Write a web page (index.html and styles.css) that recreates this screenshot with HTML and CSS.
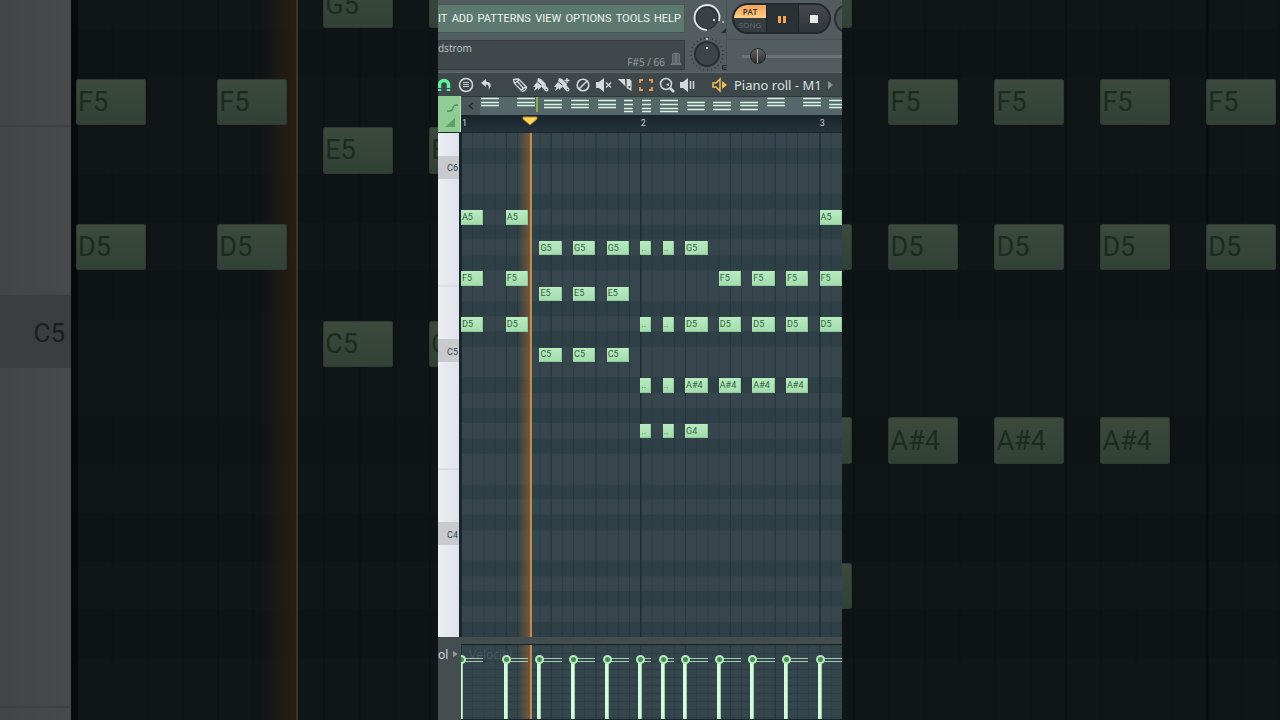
FILE: index.html
```html
<!DOCTYPE html>
<html lang="en">
<head>
<meta charset="utf-8">
<title>Piano roll - M1</title>
<link rel="stylesheet" href="styles.css">
</head>
<body>
<div class="backdrop" aria-hidden="true">
  <div class="keys keys-large"><span class="key-c">C5</span></div>
  <div class="grid grid-large">
    <span class="playhead"></span>
    <span class="note" style="grid-area:1/8/auto/span 2">G5</span>
    <span class="note" style="grid-area:3/1/auto/span 2">F5</span>
    <span class="note" style="grid-area:3/5/auto/span 2">F5</span>
    <span class="note" style="grid-area:6/1/auto/span 2">D5</span>
    <span class="note" style="grid-area:6/5/auto/span 2">D5</span>
    <span class="note" style="grid-area:4/8/auto/span 2">E5</span>
    <span class="note" style="grid-area:4/11/auto/span 2">E</span>
    <span class="note" style="grid-area:8/8/auto/span 2">C5</span>
    <span class="note" style="grid-area:8/11/auto/span 2">C</span>
    <span class="note" style="grid-area:1/11/auto/span 2"></span>
    <span class="note" style="grid-area:1/21/auto/span 2"></span>
    <span class="note" style="grid-area:6/21/auto/span 2"></span>
    <span class="note" style="grid-area:10/21/auto/span 2"></span>
    <span class="note" style="grid-area:13/21/auto/span 2"></span>
    <span class="note" style="grid-area:3/24/auto/span 2">F5</span>
    <span class="note" style="grid-area:3/27/auto/span 2">F5</span>
    <span class="note" style="grid-area:3/30/auto/span 2">F5</span>
    <span class="note" style="grid-area:3/33/auto/span 2">F5</span>
    <span class="note" style="grid-area:6/24/auto/span 2">D5</span>
    <span class="note" style="grid-area:6/27/auto/span 2">D5</span>
    <span class="note" style="grid-area:6/30/auto/span 2">D5</span>
    <span class="note" style="grid-area:6/33/auto/span 2">D5</span>
    <span class="note" style="grid-area:10/24/auto/span 2">A#4</span>
    <span class="note" style="grid-area:10/27/auto/span 2">A#4</span>
    <span class="note" style="grid-area:10/30/auto/span 2">A#4</span>
  </div>
</div>

<main class="app">
  <header class="top">
    <div class="top-left">
      <nav class="menu">
        <button>IT</button><button>ADD</button><button>PATTERNS</button><button>VIEW</button><button>OPTIONS</button><button>TOOLS</button><button>HELP</button>
      </nav>
      <div class="hint">
        <span class="hint-name">dstrom</span>
        <span class="hint-note">F#5 / 66
          <svg width="14" height="16" viewBox="0 0 14 16"><path d="M3 3q4-3 8 0v8l2 3H1l2-3z" fill="#6d7678"/><path d="M5 3v9M9 3v9" stroke="#465153"/></svg>
        </span>
      </div>
    </div>
    <div class="knobs">
      <button class="knob" aria-label="Main volume">
        <svg width="38" height="36" viewBox="0 0 38 36"><circle cx="18" cy="18" r="11" fill="#394144" stroke="#242b2e"/><path d="M18 30A12.500 12.500 0 1 1 30 21" fill="none" stroke="#e4e8e8" stroke-width="1.800"/><circle cx="25" cy="20" r="1" fill="#fff"/><circle cx="34" cy="22" r="1" fill="#bcc3c4"/><path d="M37 28v5h-5z" fill="#252d30"/></svg>
      </button>
      <button class="knob" aria-label="Main pitch">
        <svg width="38" height="36" viewBox="0 0 38 36"><circle cx="18" cy="18" r="16" fill="none" stroke="#2c3538" stroke-width="1.500" stroke-dasharray="1 3"/><circle cx="18" cy="18" r="13" fill="#272e31"/><circle cx="18" cy="18" r="11" fill="#3d4548"/><circle cx="18" cy="12" r="1" fill="#fff"/><circle cx="18" cy="3" r="1" fill="#dce0e0"/><path d="M37.500 29.500h-4v4h4M33.500 31.500h4" fill="none" stroke="#252d30"/></svg>
      </button>
    </div>
    <div class="top-right">
      <div class="transport">
        <div class="pill">
          <div class="mode"><button class="pat">PAT</button><button class="song">SONG</button></div>
          <button class="play" aria-label="Pause"><svg width="8" height="8" viewBox="0 0 8 8"><path d="M0 1h3v7H0zM5 1h3v7H5z" fill="#f6a54c"/></svg></button>
          <button class="stop" aria-label="Stop"><svg width="8" height="8" viewBox="0 0 8 8"><path d="M0 0h8v8H0z" fill="#e6e8e9"/></svg></button>
        </div>
        <button class="record" aria-label="Record"></button>
      </div>
      <div class="position"><input type="range" min="0" max="100" value="8" aria-label="Song position"></div>
    </div>
  </header>

  <div class="toolbar">
    <button class="tool tool-first" aria-label="Snap"><svg width="16" height="16" viewBox="0 0 16 16"><path d="M3.500 14V8a4.500 4.500 0 0 1 9 0v6" fill="none" stroke="#5df29b" stroke-width="3.500"/><path d="M1 11.500h5M10 11.500h5" stroke="#3d4749"/></svg></button>
    <button class="tool" aria-label="Piano roll options"><svg width="16" height="16" viewBox="0 0 16 16"><circle cx="8" cy="8" r="6.500" fill="none" stroke="#d3dadb" stroke-width="1.500"/><path d="M5 5.500h6M5 7.500h6M5 9.500h6" stroke="#d3dadb" stroke-width=".9"/></svg></button>
    <button class="tool" aria-label="Undo"><svg width="16" height="16" viewBox="0 0 16 16"><path d="M7 2L2 6l5 4V7.500q4 0 2.500 5.500Q15 6 7 4.500z" fill="#d3dadb"/></svg></button>
    <span class="tool-gap"></span>
    <button class="tool" aria-label="Draw"><svg width="16" height="16" viewBox="0 0 16 16"><path d="M1.500 2.500l5-.5 8 8q0 3-4 4.500l-8-8zM3 6L7 3M5 4l7 8M9 14q1-3 5-4" fill="none" stroke="#d3dadb" stroke-width="1.300"/></svg></button>
    <button class="tool" aria-label="Paint"><svg width="16" height="16" viewBox="0 0 16 16"><path d="M5 1l3 1 5 5-1 2-3 .5L5 13l0-2-4 3 1.500-4L0 10l4-5z" fill="#d3dadb"/><path d="M4 4.500l6 5" stroke="#3e484a"/><path d="M10.500 9l3 3.500" stroke="#d3dadb" stroke-width="4" stroke-linecap="round"/><circle cx="13.500" cy="12.500" r=".8" fill="#3d4749"/></svg></button>
    <button class="tool" aria-label="Paint sequence"><svg width="16" height="16" viewBox="0 0 16 16"><path d="M5 1l3 1 5 5-1 2-3 .5L5 13l0-2-4 3 1.500-4L0 10l4-5z" fill="#d3dadb"/><path d="M4 4.500l6 5" stroke="#3e484a"/><path d="M10.500 9l3 3.500" stroke="#d3dadb" stroke-width="4" stroke-linecap="round"/><path d="M13 1v5M10.500 3.500h5" stroke="#d3dadb" stroke-width="1.300"/><circle cx="13.500" cy="12.500" r=".8" fill="#3d4749"/></svg></button>
    <button class="tool" aria-label="Delete"><svg width="16" height="16" viewBox="0 0 16 16"><circle cx="8" cy="8" r="5.800" fill="none" stroke="#d3dadb" stroke-width="1.600"/><path d="M4 12l8-8" stroke="#d3dadb" stroke-width="1.600"/></svg></button>
    <button class="tool" aria-label="Mute"><svg width="16" height="16" viewBox="0 0 16 16"><path d="M0 5h3l5-4v14l-5-4H0z" fill="#d3dadb"/><path d="M10 5.500l5 5M15 5.500l-5 5" stroke="#d3dadb" stroke-width="1.300"/></svg></button>
    <button class="tool" aria-label="Slice"><svg width="16" height="16" viewBox="0 0 16 16"><path d="M1 2h7l1 8z" fill="#d3dadb"/><path d="M9.500 2h3l2 2v10l-5-3z" fill="#d3dadb"/><path d="M8.800 1v10" stroke="#3d4749" stroke-width=".8"/><circle cx="12.300" cy="10" r="1" fill="#3d4749"/></svg></button>
    <button class="tool" aria-label="Select"><svg width="16" height="16" viewBox="0 0 16 16"><path d="M2 6V3h3M11 3h3v3M14 10v3h-3M5 13H2v-3" fill="none" stroke="#ec9c53" stroke-width="1.800"/></svg></button>
    <button class="tool" aria-label="Zoom"><svg width="16" height="16" viewBox="0 0 16 16"><circle cx="7" cy="7" r="5.500" fill="none" stroke="#d3dadb" stroke-width="1.500"/><path d="M7 8l3-2v3z" fill="#d3dadb"/><path d="M11 11l4 4" fill="none" stroke="#d3dadb" stroke-width="2.500"/></svg></button>
    <button class="tool" aria-label="Playback"><svg width="16" height="16" viewBox="0 0 16 16"><path d="M0 5h3l5-4v14l-5-4H0z" fill="#d3dadb"/><path d="M10.500 4v8M13.500 4v8" stroke="#d3dadb" stroke-width="1.500"/></svg></button>
    <span class="tool-gap"></span>
    <button class="title"><svg width="16" height="16" viewBox="0 0 16 16"><path d="M1 6h3l4-4v12l-4-4H1z" fill="none" stroke="#f4bd4c" stroke-width="1.500"/><path d="M10 4l5 4-5 4z" fill="#f4bd4c"/></svg>Piano roll - M1<svg width="5" height="8" viewBox="0 0 5 8"><path d="M0 0l5 4-5 4z" fill="#899193"/></svg></button>
  </div>

  <div class="ruler">
    <button class="ramp" aria-label="Slide"><svg width="22" height="35" viewBox="0 0 22 35"><path d="M9 14h3q2 0 3-3t3-3h2" fill="none" stroke="#4f9059" stroke-width="1.500"/><path d="M17 21v9H7z" fill="#5b9e67"/></svg></button>
    <div class="ruler-main">
      <div class="overview">
        <button class="scroll" aria-label="Scroll left"><svg width="6" height="8" viewBox="0 0 6 8"><path d="M5 1L1 4l4 3" fill="none" stroke="#20292c" stroke-width="1.300"/></svg></button>
        <svg class="mini" width="362" height="18" viewBox="0 0 362 18"><path d="M1 1.500h18M1 5.500h18M1 8.500h18M37 1.500h18M37 5.500h18M37 8.500h18M64 3.500h18M64 7.500h18M64 10.500h18M91 3.500h18M91 7.500h18M91 10.500h18M118 3.500h18M118 7.500h18M118 10.500h18M144 3.500h9M144 7.500h9M144 11.500h9M144 14.500h9M162 3.500h9M162 7.500h9M162 11.500h9M162 14.500h9M180 3.500h18M180 7.500h18M180 11.500h18M180 14.500h18M207 5.500h18M207 8.500h18M207 12.500h18M233 5.500h18M233 8.500h18M233 12.500h18M260 5.500h18M260 8.500h18M260 12.500h18M287 1.500h18M287 5.500h18M287 8.500h18M323 1.500h18M323 5.500h18M323 8.500h18M349 3.500h18M349 7.500h18M349 10.500h18" stroke="#d9f5e4" stroke-width="1.300"/><path d="M57 0v15" stroke="#8bb04a" stroke-width="2"/></svg>
      </div>
      <div class="timeline">
        <span style="grid-column:1/span 2">1</span><span style="grid-column:17/span 2">2</span><span style="grid-column:33/span 2">3</span>
        <svg class="marker" width="16" height="10" viewBox="0 0 16 10"><path d="M1 1h14v2L8 9 1 3z" fill="#fbd55e" stroke="#b98528"/></svg>
      </div>
    </div>
  </div>

  <section class="roll">
    <div class="keys"><span class="key-c" style="grid-row:4/span 3">C6</span><span class="key-c" style="grid-row:28/span 3">C5</span><span class="key-c" style="grid-row:52/span 3">C4</span></div>
    <div class="grid">
      <span class="playhead"></span>
      <span class="note" style="grid-area:6/1/auto/span 2">A5</span>
      <span class="note" style="grid-area:6/5/auto/span 2">A5</span>
      <span class="note" style="grid-area:6/33/auto/span 2">A5</span>
      <span class="note" style="grid-area:8/8/auto/span 2">G5</span>
      <span class="note" style="grid-area:8/11/auto/span 2">G5</span>
      <span class="note" style="grid-area:8/14/auto/span 2">G5</span>
      <span class="note" style="grid-area:8/17">..</span>
      <span class="note" style="grid-area:8/19">..</span>
      <span class="note" style="grid-area:8/21/auto/span 2">G5</span>
      <span class="note" style="grid-area:10/1/auto/span 2">F5</span>
      <span class="note" style="grid-area:10/5/auto/span 2">F5</span>
      <span class="note" style="grid-area:10/24/auto/span 2">F5</span>
      <span class="note" style="grid-area:10/27/auto/span 2">F5</span>
      <span class="note" style="grid-area:10/30/auto/span 2">F5</span>
      <span class="note" style="grid-area:10/33/auto/span 2">F5</span>
      <span class="note" style="grid-area:11/8/auto/span 2">E5</span>
      <span class="note" style="grid-area:11/11/auto/span 2">E5</span>
      <span class="note" style="grid-area:11/14/auto/span 2">E5</span>
      <span class="note" style="grid-area:13/1/auto/span 2">D5</span>
      <span class="note" style="grid-area:13/5/auto/span 2">D5</span>
      <span class="note" style="grid-area:13/17">..</span>
      <span class="note" style="grid-area:13/19">..</span>
      <span class="note" style="grid-area:13/21/auto/span 2">D5</span>
      <span class="note" style="grid-area:13/24/auto/span 2">D5</span>
      <span class="note" style="grid-area:13/27/auto/span 2">D5</span>
      <span class="note" style="grid-area:13/30/auto/span 2">D5</span>
      <span class="note" style="grid-area:13/33/auto/span 2">D5</span>
      <span class="note" style="grid-area:15/8/auto/span 2">C5</span>
      <span class="note" style="grid-area:15/11/auto/span 2">C5</span>
      <span class="note" style="grid-area:15/14/auto/span 2">C5</span>
      <span class="note" style="grid-area:17/17">..</span>
      <span class="note" style="grid-area:17/19">..</span>
      <span class="note" style="grid-area:17/21/auto/span 2">A#4</span>
      <span class="note" style="grid-area:17/24/auto/span 2">A#4</span>
      <span class="note" style="grid-area:17/27/auto/span 2">A#4</span>
      <span class="note" style="grid-area:17/30/auto/span 2">A#4</span>
      <span class="note" style="grid-area:20/17">..</span>
      <span class="note" style="grid-area:20/19">..</span>
      <span class="note" style="grid-area:20/21/auto/span 2">G4</span>
    </div>
  </section>

  <section class="control">
    <button class="control-name">ol <svg width="5" height="6" viewBox="0 0 5 6"><path d="M0 0l5 3-5 3z" fill="#929b9c"/></svg></button>
    <div class="lane">
      <span class="playhead"></span>
      <span class="lane-label">Velocity</span>
      <span class="stem" style="grid-column:1/span 2"></span>
      <span class="stem" style="grid-column:5/span 2"></span>
      <span class="stem" style="grid-column:8/span 2"></span>
      <span class="stem" style="grid-column:11/span 2"></span>
      <span class="stem" style="grid-column:14/span 2"></span>
      <span class="stem" style="grid-column:17"></span>
      <span class="stem" style="grid-column:19"></span>
      <span class="stem" style="grid-column:21/span 2"></span>
      <span class="stem" style="grid-column:24/span 2"></span>
      <span class="stem" style="grid-column:27/span 2"></span>
      <span class="stem" style="grid-column:30/span 2"></span>
      <span class="stem" style="grid-column:33/span 2"></span>
    </div>
  </section>
</main>
</body>
</html>
```
FILE: styles.css
```css
*, *::before, *::after { box-sizing: border-box; }

body {
  margin: 0;
  min-height: 100vh;
  display: flex;
  justify-content: center;
  position: relative;
  overflow: hidden;
  background: #0d1314;
  font-family: "Open Sans", "Liberation Sans", sans-serif;
}

button {
  margin: 0;
  padding: 0;
  border: 0;
  background: none;
  color: inherit;
  font: inherit;
}

svg { display: block; flex: none; }

/* Piano keys and note grid, shared by the editor and the dimmed backdrop */
.keys {
  display: grid;
  grid-template-rows: repeat(66, 1fr);
  flex: none;
  width: 24px;
  border-right: 2px solid #16252b;
  background:
    linear-gradient(transparent 83.3%, #cfd2d8 83.3%, #cfd2d8 83.8%, transparent 83.8%) 0 0 / 100% calc(1200% / 33),
    linear-gradient(90deg, #eceef4, #dfe2ea);
}

.key-c {
  display: flex;
  align-items: center;
  justify-content: flex-end;
  padding: 2px 1px 0 0;
  background: #c8cacf;
  color: #3d4045;
  font: 9px Roboto, sans-serif;
}

.grid {
  --dark: #2f3f46;
  --beat: #26363e;
  --step: rgba(28, 44, 52, 0.35);
  --bar: #18282f;
  position: relative;
  flex: 1;
  display: grid;
  grid-template-columns: repeat(34, 1fr);
  grid-template-rows: repeat(33, 1fr);
  background:
    linear-gradient(90deg, var(--bar) 1px, transparent 1px) 0 0 / calc(1600% / 34) 100%,
    linear-gradient(90deg, var(--beat) 1px, transparent 1px) 0 0 / calc(400% / 34) 100%,
    linear-gradient(90deg, var(--step) 1px, transparent 1px) 0 0 / calc(100% / 34) 100%,
    linear-gradient(transparent 8.33%, var(--dark) 8.33%, var(--dark) 16.67%, transparent 16.67%, transparent 33.33%, var(--dark) 33.33%, var(--dark) 41.67%, transparent 41.67%, transparent 50%, var(--dark) 50%, var(--dark) 58.33%, transparent 58.33%, transparent 66.67%, var(--dark) 66.67%, var(--dark) 75%, transparent 75%, transparent 91.67%, var(--dark) 91.67%) 0 0 / 100% calc(1200% / 33),
    #36464c;
}

/* The two roll columns of the editor */
.roll .keys { width: 23px; }

.note {
  position: relative;
  min-width: 0;
  min-height: 0;
  margin-top: 1px;
  padding-left: 1px;
  display: flex;
  align-items: center;
  overflow: hidden;
  border: solid #8fcc9b;
  border-width: 0 1px 1px 0;
  background: linear-gradient(#b9ecc1, #a5dcae);
  color: #33643f;
  font: 9px Roboto, sans-serif;
}

.playhead {
  position: absolute;
  top: 0;
  bottom: 0;
  right: 81.5%;
  width: 14px;
  border-right: 2px solid #bd8a58;
  background: linear-gradient(90deg, transparent, rgba(150, 98, 48, 0.7));
}

.backdrop {
  position: absolute;
  inset: 0;
  display: flex;
  align-items: flex-start;
  overflow: hidden;
  padding-right: 3px;
}

.keys-large {
  width: 76px;
  height: 774px;
  margin-top: -19px;
  grid-template-rows: repeat(32, 1fr);
  border-right: 5px solid #06090b;
  background:
    linear-gradient(transparent 144px, #3e3f41 144px, #3e3f41 146px, transparent 146px, transparent 725px, #3e3f41 725px, #3e3f41 727px, transparent 727px),
    linear-gradient(90deg, #434446, #48494b);
}

.keys-large .key-c {
  grid-row: 14 / span 3;
  padding-right: 6px;
  background: #3b3c3e;
  color: #1c1d1f;
  font-size: 26px;
}

.grid-large {
  --dark: #0e1415;
  --beat: #0b1114;
  --step: rgba(10, 15, 18, 0.4);
  --bar: #070b0d;
  height: 774px;
  margin-top: -19px;
  grid-template-rows: repeat(16, 1fr);
  background:
    linear-gradient(90deg, var(--bar) 2px, transparent 2px) 0 0 / calc(1600% / 34) 100%,
    linear-gradient(90deg, var(--beat) 2px, transparent 2px) 0 0 / calc(400% / 34) 100%,
    linear-gradient(90deg, var(--step) 2px, transparent 2px) 0 0 / calc(100% / 34) 100%,
    linear-gradient(transparent 8.33%, var(--dark) 8.33%, var(--dark) 16.67%, transparent 16.67%, transparent 33.33%, var(--dark) 33.33%, var(--dark) 41.67%, transparent 41.67%, transparent 50%, var(--dark) 50%, var(--dark) 58.33%, transparent 58.33%, transparent 75%, var(--dark) 75%, var(--dark) 83.33%, transparent 83.33%, transparent 91.67%, var(--dark) 91.67%) 0 0 / 100% 75%,
    #101617;
}

.grid-large .note {
  margin: 1px 1px 1px 0;
  padding-left: 1px;
  border: 1px solid #2c3a2f;
  border-radius: 2px;
  background: linear-gradient(#3b4a3d, #324135);
  color: #1a2c1e;
  font-size: 27px;
}

.grid-large .playhead {
  width: 36px;
  border-right-color: #46301f;
  background: linear-gradient(90deg, transparent, #2a1e14);
}

/* Editor */
.app {
  position: relative;
  width: 404px;
  height: 100vh;
  display: flex;
  flex-direction: column;
  overflow: hidden;
  background: #434d4f;
}

.top {
  display: flex;
  height: 73px;
  background: #535c5f;
  border-bottom: 1px solid #5f6769;
}

.top-left {
  flex: none;
  width: 247px;
  display: flex;
  flex-direction: column;
  justify-content: space-between;
  padding: 4px 0 2px;
}

.menu {
  display: flex;
  justify-content: space-between;
  align-items: center;
  height: 29px;
  padding-right: 3px;
  background: #5c786f;
  border: solid #445a54;
  border-width: 1px 1px 1px 0;
  color: #eff8f4;
  font: 11px Roboto, sans-serif;
}

.hint {
  height: 30px;
  display: flex;
  flex-direction: column;
  justify-content: space-between;
  background: #3f494b;
  border: solid #333c3e;
  border-width: 1px 1px 1px 0;
  color: #c1c8c9;
  font-size: 10px;
  line-height: 14px;
}

.hint-note {
  display: flex;
  align-items: center;
  justify-content: flex-end;
  gap: 4px;
  height: 14px;
  padding-right: 1px;
  color: #98a1a3;
}

.hint-note svg { margin-bottom: 6px; }

.knobs {
  flex: none;
  width: 42px;
  display: flex;
  flex-direction: column;
  padding-left: 4px;
  border-right: 1px solid #485154;
}

.knob { height: 36px; }

.top-right {
  flex: 1;
  min-width: 0;
  display: flex;
  flex-direction: column;
}

.transport {
  display: flex;
  gap: 3px;
  height: 40px;
  padding: 3px 0 0 5px;
  border-bottom: 1px solid #485154;
}

.pill {
  flex: none;
  display: flex;
  width: 99px;
  height: 31px;
  overflow: hidden;
  border: 2px solid #23292c;
  border-radius: 16px;
  background: #353d40;
}

.mode {
  width: 32px;
  display: flex;
  flex-direction: column;
}

.pat, .song {
  height: 13px;
  font-size: 8px;
  line-height: 12px;
}

.pat {
  background: linear-gradient(#f4a35a, #ffd08a);
  border-radius: 12px 0 0 0;
  color: #3a2410;
  font-weight: 600;
}

.song { color: #666d70; }

.play, .stop {
  flex: 1;
  display: grid;
  place-items: center;
  border-left: 1px solid #1d2326;
}

.play { background: #2b3235; }

.stop { background: linear-gradient(#43494d, #2f3639); }

.record {
  flex: none;
  width: 31px;
  height: 31px;
  border: 2px solid #2a3033;
  border-radius: 50%;
  background: #4a5255;
}

.position {
  padding: 6px 0 0 15px;
}

.position input {
  display: block;
  width: 110px;
  height: 20px;
  margin: 0;
  appearance: none;
  background: linear-gradient(#6a7376, #6a7376) 0 9px / 100% 3px no-repeat;
}

.position input::-webkit-slider-thumb {
  appearance: none;
  width: 16px;
  height: 16px;
  border: 1px solid #22282a;
  border-radius: 50%;
  background: linear-gradient(90deg, transparent 6px, #d49a88 6px, #d49a88 7px, transparent 7px), linear-gradient(#5d6467, #2a3032);
}

.toolbar {
  display: flex;
  align-items: center;
  height: 23px;
  background: #3e484a;
}

.tool {
  flex: none;
  width: 21px;
  display: grid;
  place-items: center;
}

.tool-first {
  width: 17px;
  justify-content: end;
  padding-right: 3px;
}

.tool-gap {
  flex: none;
  width: 12px;
}

.title {
  display: flex;
  align-items: center;
  gap: 6px;
  padding-left: 2px;
  color: #dbe0e1;
  font: 13px/18px "Noto Sans", sans-serif;
  white-space: nowrap;
}

.ruler {
  display: flex;
  height: 36px;
}

.ramp {
  flex: none;
  width: 23px;
  border-right: 1px solid #b7e7b8;
  background: #8fcd94;
}

.ruler-main {
  flex: 1;
  min-width: 0;
  background: #1b272c;
}

.overview {
  display: flex;
  height: 19px;
  background: #56676a;
  border-top: 1px solid #2b3638;
}

.scroll {
  flex: none;
  width: 19px;
  display: grid;
  place-items: center;
  background: #4c5659;
}

.timeline {
  position: relative;
  display: grid;
  grid-template-columns: repeat(34, 1fr);
  align-items: center;
  height: 17px;
  padding-left: 1px;
  background: linear-gradient(#18242a, #25343a);
  color: #c6d0d3;
  font: 9px/17px Roboto, sans-serif;
}

.marker {
  position: absolute;
  top: 1px;
  left: 16%;
}

.roll {
  flex: 1;
  display: flex;
  min-height: 0;
  padding-top: 1px;
  background: #1d282c;
}

.control {
  display: flex;
  height: 83px;
  padding-top: 7px;
  background: #444d4f;
}

.control-name {
  flex: none;
  width: 23px;
  height: 20px;
  display: flex;
  align-items: center;
  gap: 5px;
  color: #dde2e2;
  font-size: 12px;
}

.lane {
  flex: 1;
  position: relative;
  display: grid;
  grid-template-columns: repeat(34, 1fr);
  grid-template-rows: 1fr;
  overflow: hidden;
  border: solid #17252b;
  border-width: 1px 0;
  background:
    linear-gradient(90deg, #26363e 1px, transparent 1px) 0 0 / calc(400% / 34) 100%,
    linear-gradient(90deg, rgba(28, 44, 52, 0.3) 1px, transparent 1px) 0 0 / calc(100% / 34) 100%,
    linear-gradient(rgba(28, 44, 52, 0.3) 1px, transparent 1px) 0 0 / 100% 8px,
    #34454c;
}

.lane-label {
  position: absolute;
  top: 1px;
  left: 8px;
  color: #4b585e;
  font-size: 12px;
  line-height: 17px;
}

.stem {
  position: relative;
  grid-row: 1;
  height: 4px;
  margin-top: 13px;
  border: solid #a2c9b4;
  border-width: 1px 0;
}

.stem::before {
  content: "";
  position: absolute;
  top: 2px;
  left: -2px;
  width: 4px;
  height: 80px;
  background: #d3fbdc;
  border: solid #9fd0ab;
  border-width: 0 1px 0 0;
}

.stem::after {
  content: "";
  position: absolute;
  top: -4px;
  left: -4px;
  width: 9px;
  height: 9px;
  border: 2px solid #b5ecbf;
  border-radius: 50%;
  background: #4b8a57;
}
```
